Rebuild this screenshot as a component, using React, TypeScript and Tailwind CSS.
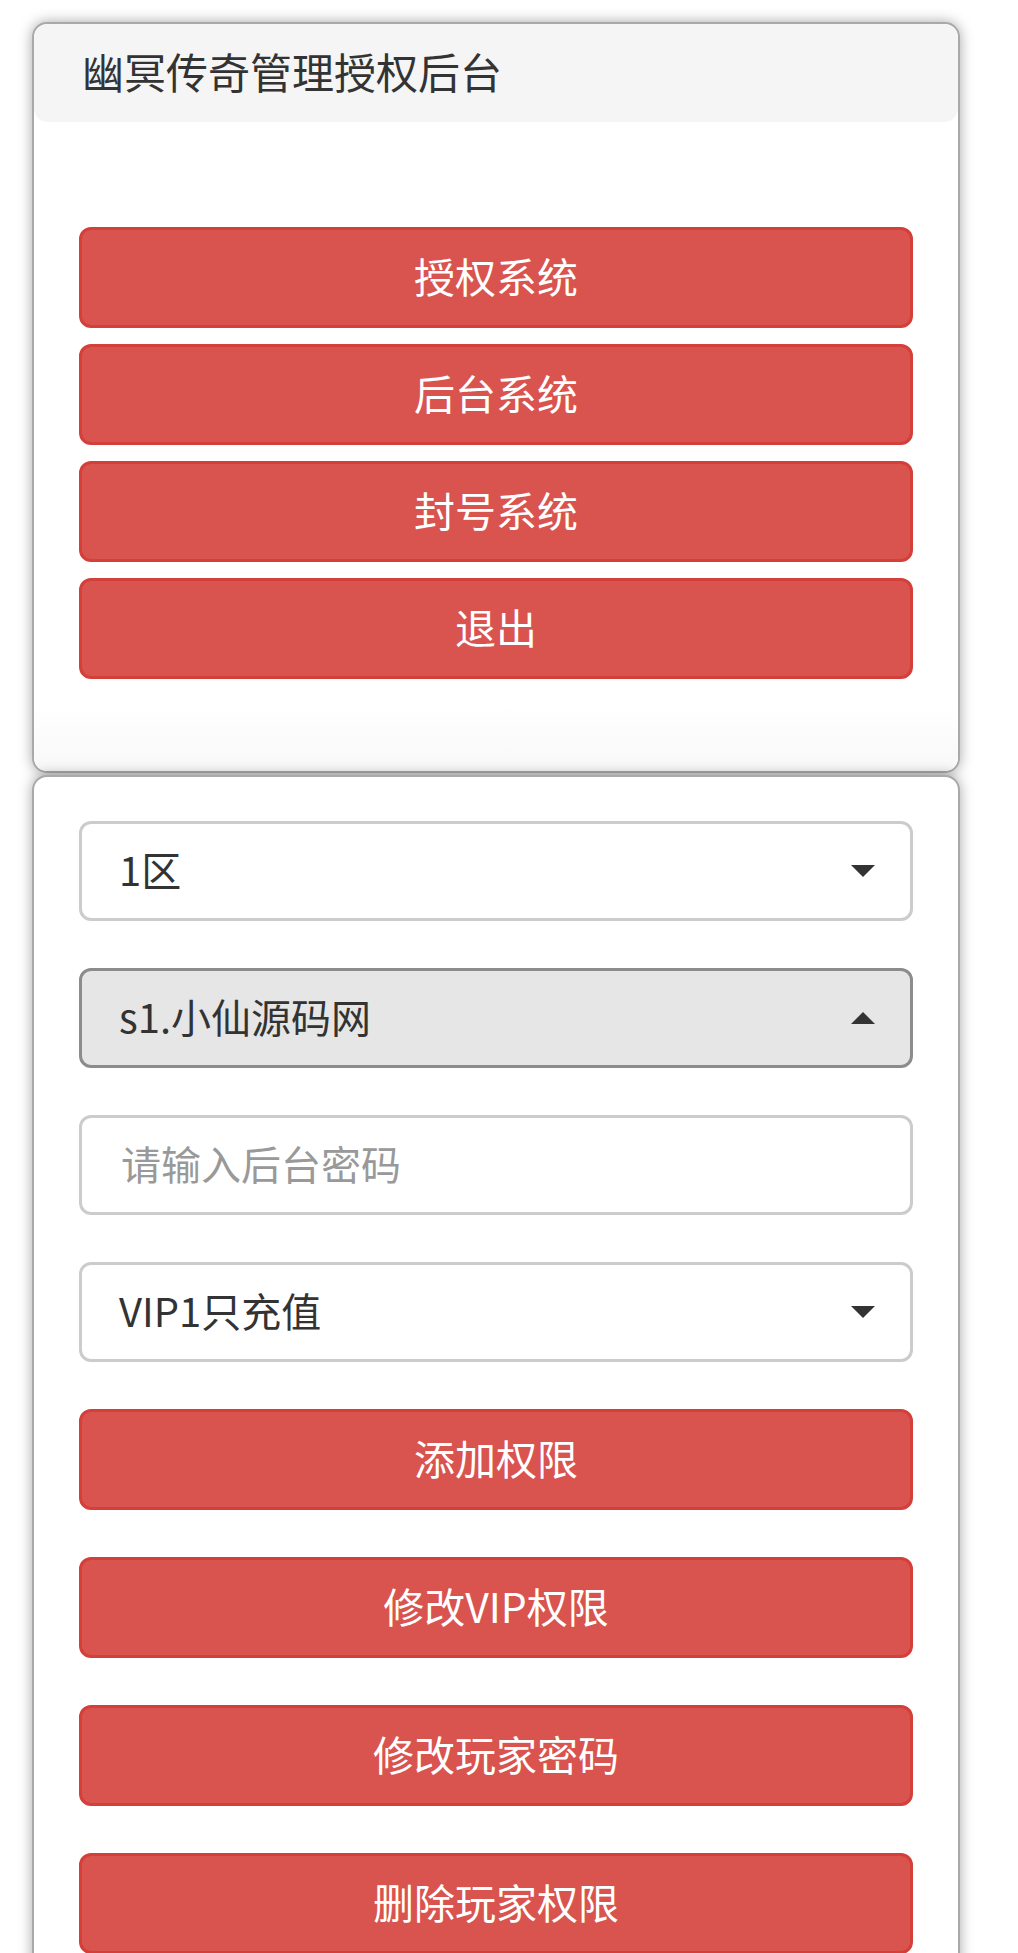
import { useState } from 'react';

const font = "font-['Noto_Sans_CJK_SC','Noto_Sans',sans-serif]";

function DangerButton({ label }: { label: string }) {
    return (
        <button
            type="button"
            className="flex h-[101px] w-full items-center justify-center rounded-[12px] border-[3px] border-[#d43f3a] bg-[#d9534f] pb-[5px] text-[41px] leading-none text-white"
        >
            {label}
        </button>
    );
}

function FakeSelect({ value, open }: { value: string; open?: boolean }) {
    return (
        <div
            className={
                open
                    ? 'flex h-[100px] items-center justify-between rounded-[12px] border-[3px] border-[#8c8c8c] bg-[#e6e6e6] pl-[37px] pr-[35px]'
                    : 'flex h-[100px] items-center justify-between rounded-[12px] border-[3px] border-[#cccccc] bg-white pl-[37px] pr-[35px]'
            }
        >
            <span className="pb-[4px] text-[40px] leading-none text-[#333]">{value}</span>
            {open ? (
                <span className="h-0 w-0 border-x-[12px] border-b-[12px] border-x-transparent border-b-[#333]" />
            ) : (
                <span className="h-0 w-0 border-x-[12px] border-t-[12px] border-x-transparent border-t-[#333]" />
            )}
        </div>
    );
}

export default function App() {
    const [password, setPassword] = useState('');

    return (
        <div className={`min-h-[1953px] bg-white pt-[22px] ${font}`}>
            {/* Menu panel */}
            <div className="ml-[32px] w-[928px] overflow-hidden rounded-[15px] border-2 border-[#a9a9a9] bg-white shadow-[0_0_14px_rgba(0,0,0,0.35)]">
                <div className="flex h-[98px] items-center rounded-[14px] bg-[#f5f5f5] pb-[4px] pl-[48px] text-[42px] leading-none text-[#333]">
                    幽冥传奇管理授权后台
                </div>
                <div className="flex flex-col gap-4 bg-gradient-to-b from-white from-90% to-[#f8f8f8] px-[45px] pb-[92px] pt-[105px]">
                    <DangerButton label="授权系统" />
                    <DangerButton label="后台系统" />
                    <DangerButton label="封号系统" />
                    <DangerButton label="退出" />
                </div>
            </div>

            {/* Form panel */}
            <div className="ml-[32px] mt-[2px] w-[928px] rounded-[15px] border-2 border-[#a9a9a9] bg-white shadow-[0_0_14px_rgba(0,0,0,0.35)]">
                <div className="flex flex-col gap-[47px] px-[45px] pb-[45px] pt-[44px]">
                    <FakeSelect value="1区" />
                    <FakeSelect value="s1.小仙源码网" open />
                    <input
                        value={password}
                        onChange={(e) => setPassword(e.target.value)}
                        placeholder="请输入后台密码"
                        className="h-[100px] rounded-[12px] border-[3px] border-[#cccccc] bg-white pb-[4px] pl-[39px] text-[40px] text-[#333] outline-none placeholder:text-[#999]"
                    />
                    <FakeSelect value="VIP1只充值" />
                    <DangerButton label="添加权限" />
                    <DangerButton label="修改VIP权限" />
                    <DangerButton label="修改玩家密码" />
                    <DangerButton label="删除玩家权限" />
                </div>
            </div>
        </div>
    );
}
